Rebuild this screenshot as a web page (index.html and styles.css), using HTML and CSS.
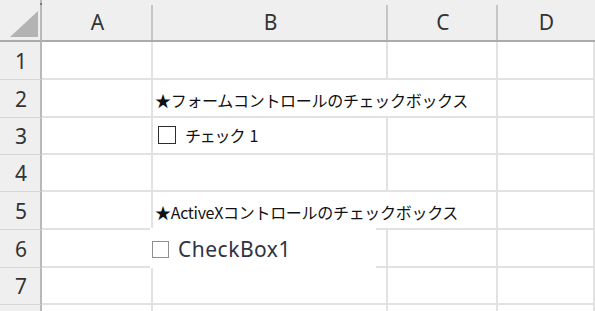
FILE: index.html
```html
<!DOCTYPE html>
<html lang="ja">
<head>
    <meta charset="UTF-8">
    <meta name="viewport" content="width=device-width, initial-scale=1.0">
    <title>チェックボックス</title>
    <link rel="stylesheet" href="styles.css">
</head>
<body>
    <div id="sheet">
        <!-- header row -->
        <div class="corner">
            <svg width="42" height="42" viewBox="0 0 42 42">
                <polygon points="38,11 38,37 10,37" fill="#b3b3b3"/>
            </svg>
        </div>
        <div class="col-head">A</div>
        <div class="col-head">B</div>
        <div class="col-head">C</div>
        <div class="col-head last">D</div>

        <div class="row-head">1</div>
        <div class="cell"></div>
        <div class="cell"></div>
        <div class="cell"></div>
        <div class="cell"></div>

        <div class="row-head">2</div>
        <div class="cell"></div>
        <div class="cell wide text">★フォームコントロールのチェックボックス</div>
        <div class="cell"></div>

        <div class="row-head">3</div>
        <div class="cell"></div>
        <div class="cell form-check">
            <span class="box"></span>
            <span class="label">チェック 1</span>
        </div>
        <div class="cell"></div>
        <div class="cell"></div>

        <div class="row-head">4</div>
        <div class="cell"></div>
        <div class="cell"></div>
        <div class="cell"></div>
        <div class="cell"></div>

        <div class="row-head">5</div>
        <div class="cell"></div>
        <div class="cell wide text">★ActiveXコントロールのチェックボックス</div>
        <div class="cell"></div>

        <div class="row-head">6</div>
        <div class="cell"></div>
        <div class="cell activex-cell">
            <div class="activex">
                <span class="ax-box"></span>
                <span class="ax-label">CheckBox1</span>
            </div>
        </div>
        <div class="cell"></div>
        <div class="cell"></div>

        <div class="row-head">7</div>
        <div class="cell"></div>
        <div class="cell"></div>
        <div class="cell"></div>
        <div class="cell"></div>

        <!-- row 8 only peeks in at the bottom edge -->
        <div class="row-head"></div>
        <div class="cell"></div>
        <div class="cell"></div>
        <div class="cell"></div>
        <div class="cell"></div>
    </div>
</body>
</html>
```

FILE: styles.css
```css
body {
    margin: 0;
    padding: 0;
    background-color: #ffffff;
    font-family: "Noto Sans CJK JP", "Noto Sans", sans-serif;
    overflow: hidden;
}
#sheet {
    display: grid;
    grid-template-columns: 42px 111px 235px 110px 1fr;
    grid-template-rows: 42px 38px 38px 37px 37px 38px 38px 37px 38px;
    width: 595px;
    height: 311px;
    overflow: hidden;
}
.corner {
    background-color: #efefef;
    border-right: 2px solid #b9b9b9;
    border-bottom: 2px solid #ababab;
    box-sizing: border-box;
    position: relative;
}
.corner svg {
    display: block;
}
.corner::after {
    content: "";
    position: absolute;
    right: -2px;
    top: 3px;
    width: 2px;
    height: 2px;
    background-color: #7a7a7a;
}
.col-head {
    position: relative;
    background-color: #efefef;
    border-bottom: 2px solid #ababab;
    box-sizing: border-box;
    display: flex;
    align-items: center;
    justify-content: center;
    padding-top: 4px;
    font-family: "Noto Sans", sans-serif;
    font-size: 21px;
    color: #333333;
}
.col-head::after {
    content: "";
    position: absolute;
    right: 0;
    top: 5px;
    bottom: 0;
    width: 2px;
    background-color: #c6c6c6;
}
.col-head.last::after {
    display: none;
}
.row-head {
    background-color: #efefef;
    border-right: 2px solid #b9b9b9;
    border-bottom: 1px solid #d6d6d6;
    box-sizing: border-box;
    display: flex;
    align-items: center;
    justify-content: center;
    padding-left: 2px;
    font-family: "Noto Sans", sans-serif;
    font-size: 21px;
    color: #333333;
}
.cell {
    border-right: 2px solid #e2e2e2;
    border-bottom: 2px solid #e2e2e2;
    box-sizing: border-box;
    background-color: #ffffff;
}
.wide {
    grid-column: span 2;
}
.text {
    display: flex;
    align-items: center;
    padding: 4px 0 0 2px;
    white-space: nowrap;
    font-size: 16px;
    letter-spacing: -0.3px;
    color: #111111;
}
.form-check {
    display: flex;
    align-items: center;
    gap: 9px;
    padding: 0 0 2px 5px;
}
.form-check .box {
    width: 18px;
    height: 18px;
    border: 1.5px solid #2d2d2d;
    box-sizing: border-box;
}
.form-check .label {
    font-size: 16px;
    letter-spacing: -1.2px;
    word-spacing: 3px;
    color: #111111;
    white-space: nowrap;
}
.activex-cell {
    position: relative;
}
.activex {
    position: absolute;
    left: -3px;
    top: -2px;
    width: 226px;
    height: 40px;
    background-color: #ffffff;
    display: flex;
    align-items: center;
    gap: 9px;
    padding: 2px 0 0 2px;
    box-sizing: border-box;
}
.ax-box {
    width: 17px;
    height: 17px;
    border: 1px solid #8f8f8f;
    box-sizing: border-box;
    background-color: #ffffff;
}
.ax-label {
    font-family: "Noto Sans", sans-serif;
    font-size: 21px;
    color: #2e3440;
    letter-spacing: 0.5px;
}
```
